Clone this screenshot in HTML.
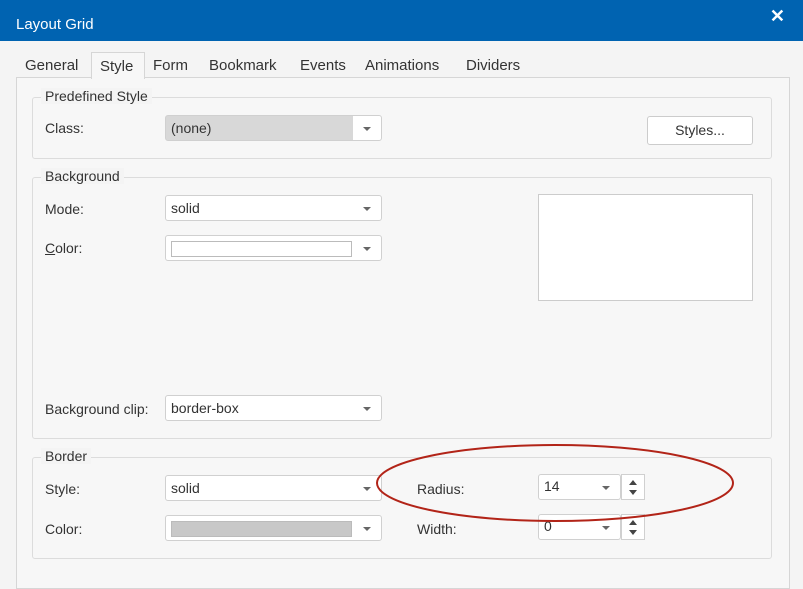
<html><head><style>
body{margin:0;width:803px;height:579px;background:#f4f4f4;font-family:"Liberation Sans",sans-serif;font-size:14px;color:#333;position:relative;overflow:hidden}
.a{position:absolute}
.g{position:absolute;border:1px solid #dcdcdc;border-radius:3px}
.gt{position:absolute;top:-10px;left:8px;background:#f4f4f4;padding:0 4px;font-size:14px}
.sel{position:absolute;background:#fff;border:1px solid #d0d0d0;border-radius:3px;height:26px;box-sizing:border-box;line-height:24px;padding-left:5px;font-size:14px}
.sel:after{content:"";position:absolute;right:10px;top:11px;border-left:4px solid transparent;border-right:4px solid transparent;border-top:4px solid #666}
.lbl{position:absolute;font-size:14px}
.sp{position:absolute;width:24px;height:26px;box-sizing:border-box;border:1px solid #d0d0d0;background:#fff}
.sp:before{content:"";position:absolute;left:7px;top:5px;border-left:4px solid transparent;border-right:4px solid transparent;border-bottom:5px solid #444}
.sp:after{content:"";position:absolute;left:7px;top:15px;border-left:4px solid transparent;border-right:4px solid transparent;border-top:5px solid #444}
</style></head><body>
<div class="a" style="left:0;top:0;width:803px;height:41px;background:#0063b1;color:#fff;font-size:15px;line-height:50px;padding-left:16px;box-sizing:border-box">Layout Grid</div>
<div class="a" style="right:18px;top:6px;color:#fff;font-size:18px;font-weight:bold">✕</div>
<div class="a" style="left:16px;top:77px;width:772px;height:510px;border:1px solid #d6d6d6;background:#f7f7f7"></div>
<div class="a" style="left:91px;top:52px;width:52px;height:26px;border:1px solid #d6d6d6;border-bottom:none;background:#f7f7f7"></div>
<div class="a" style="top:57px;left:25px;font-size:15px;color:#333;word-spacing:0">General</div>
<div class="a" style="top:58px;left:100px;font-size:15px">Style</div>
<div class="a" style="top:57px;left:153px;font-size:15px">Form</div>
<div class="a" style="top:57px;left:209px;font-size:15px">Bookmark</div>
<div class="a" style="top:57px;left:300px;font-size:15px">Events</div>
<div class="a" style="top:57px;left:365px;font-size:15px">Animations</div>
<div class="a" style="top:57px;left:466px;font-size:15px">Dividers</div>

<div class="g" style="left:32px;top:97px;width:738px;height:60px"><span class="gt">Predefined Style</span></div>
<div class="lbl" style="left:45px;top:120px">Class:</div>
<div class="sel" style="left:165px;top:115px;width:217px;background:linear-gradient(90deg,#d8d8d8 0,#d8d8d8 187px,#fff 187px)">(none)</div>
<div class="a" style="left:647px;top:116px;width:106px;height:29px;box-sizing:border-box;border:1px solid #ccc;border-radius:3px;background:#fff;text-align:center;line-height:27px">Styles...</div>

<div class="g" style="left:32px;top:177px;width:738px;height:260px"><span class="gt">Background</span></div>
<div class="lbl" style="left:45px;top:201px">Mode:</div>
<div class="sel" style="left:165px;top:195px;width:217px">solid</div>
<div class="lbl" style="left:45px;top:240px"><u>C</u>olor:</div>
<div class="sel" style="left:165px;top:235px;width:217px"><div class="a" style="left:5px;top:5px;width:179px;height:14px;border:1px solid #bbb;background:#fff"></div></div>
<div class="a" style="left:538px;top:194px;width:215px;height:107px;box-sizing:border-box;border:1px solid #ccc;background:#fff"></div>
<div class="lbl" style="left:45px;top:401px">Background clip:</div>
<div class="sel" style="left:165px;top:395px;width:217px">border-box</div>

<div class="g" style="left:32px;top:457px;width:738px;height:100px"><span class="gt">Border</span></div>
<div class="lbl" style="left:45px;top:481px">Style:</div>
<div class="sel" style="left:165px;top:475px;width:217px">solid</div>
<div class="lbl" style="left:45px;top:521px">Color:</div>
<div class="sel" style="left:165px;top:515px;width:217px"><div class="a" style="left:5px;top:5px;width:179px;height:14px;border:1px solid #bbb;background:#c8c8c8"></div></div>
<div class="lbl" style="left:417px;top:481px">Radius:</div>
<div class="sel" style="left:538px;top:474px;width:83px;line-height:22px">14</div>
<div class="sp" style="left:621px;top:474px"></div>
<div class="lbl" style="left:417px;top:521px">Width:</div>
<div class="sel" style="left:538px;top:514px;width:83px;line-height:22px">0</div>
<div class="sp" style="left:621px;top:514px"></div>
<svg class="a" style="left:0;top:0" width="803" height="579"><ellipse cx="555" cy="483" rx="178" ry="38" fill="none" stroke="#b22418" stroke-width="2"/></svg>
<style>.sel:has(div)::after,.sel[style*="83px"]::after{}</style>
</body></html>
